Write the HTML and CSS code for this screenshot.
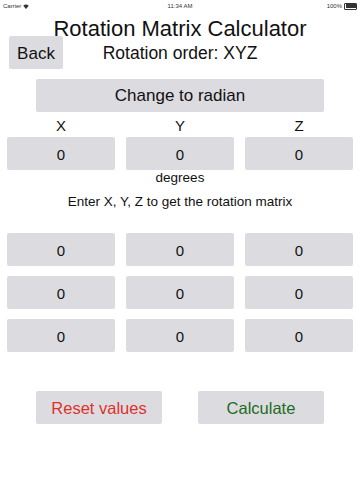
FILE: index.html
```html
<!DOCTYPE html>
<html lang="en">
<head>
    <meta charset="UTF-8">
    <meta name="viewport" content="width=device-width, initial-scale=1.0">
    <title>Rotation Matrix Calculator</title>
    <link rel="stylesheet" href="styles.css">
</head>
<body>

    <!-- Status bar -->
    <div class="status">
        <div class="status-left">
            Carrier
            <svg class="wifi" width="6" height="5" viewBox="0 0 12 10">
                <path d="M6 10 L0.5 3.5 A8 8 0 0 1 11.5 3.5 Z" fill="#333"/>
            </svg>
        </div>
        <div class="status-time">11:34 AM</div>
        <div class="status-right">
            100%
            <span class="battery"><span class="battery-fill"></span></span>
        </div>
    </div>

    <!-- Header -->
    <h1 class="title">Rotation Matrix Calculator</h1>
    <div class="header-row">
        <button class="btn back">Back</button>
        <div class="order">Rotation order: XYZ</div>
        <div></div>
    </div>

    <button class="btn wide">Change to radian</button>

    <!-- Angle inputs -->
    <div class="grid labels">
        <div>X</div>
        <div>Y</div>
        <div>Z</div>
    </div>
    <div class="grid">
        <div class="cell">0</div>
        <div class="cell">0</div>
        <div class="cell">0</div>
    </div>
    <p class="unit">degrees</p>
    <p class="hint">Enter X, Y, Z to get the rotation matrix</p>

    <!-- Matrix -->
    <div class="grid matrix">
        <div class="cell">0</div>
        <div class="cell">0</div>
        <div class="cell">0</div>
        <div class="cell">0</div>
        <div class="cell">0</div>
        <div class="cell">0</div>
        <div class="cell">0</div>
        <div class="cell">0</div>
        <div class="cell">0</div>
    </div>

    <div class="actions">
        <button class="btn action reset">Reset values</button>
        <button class="btn action calc">Calculate</button>
    </div>

</body>
</html>
```

FILE: styles.css
```css
body { margin: 0; width: 360px; height: 480px; background: #fff; color: #111; font-family: "Liberation Sans", Arial, sans-serif; }

/* Status bar */
.status { height: 12px; display: grid; grid-template-columns: 1fr auto 1fr; align-items: center; padding: 0 3px; font-size: 6px; color: #333; }
.status-left { display: flex; align-items: center; gap: 2px; }
.status-time { text-align: center; }
.status-right { display: flex; justify-content: flex-end; align-items: center; gap: 2px; }
.battery { width: 10px; height: 4px; border: 0.5px solid #333; border-radius: 1px; padding: 0.5px; display: flex; }
.battery-fill { flex: 1; background: #333; }

/* Header */
.title { margin: 7px 0 -2px; font-size: 22px; font-weight: normal; line-height: 19px; text-align: center; }
.header-row { display: grid; grid-template-columns: 54px 1fr 54px; align-items: center; padding: 0 9px; height: 33px; }
.order { text-align: center; font-size: 17.5px; padding-top: 2px; }

.btn { border: none; border-radius: 2px; background: #dcdce0; color: #111; font-family: inherit; padding: 2px 0 0; height: 33px; cursor: pointer; }
.back { font-size: 17px; width: 54px; }
.wide { display: block; width: 288px; margin: 10px auto 0; font-size: 17px; padding-top: 1px; }

/* Grids */
.grid { display: grid; grid-template-columns: repeat(3, 1fr); column-gap: 11px; row-gap: 10px; padding: 0 7px; }
.labels { height: 25px; align-items: center; text-align: center; font-size: 15px; padding-top: 2px; box-sizing: border-box; }
.cell { height: 33px; display: flex; align-items: center; justify-content: center; background: #dcdce0; border-radius: 2px; font-size: 15px; padding-top: 1px; box-sizing: border-box; }

.unit { margin: 0; text-align: center; font-size: 13.5px; line-height: 16px; }
.hint { margin: 8px 0 0; text-align: center; font-size: 13.5px; line-height: 16px; }
.matrix { margin-top: 23px; }

/* Bottom actions */
.actions { display: flex; justify-content: space-between; width: 288px; margin: 39px auto 0; }
.action { width: 126px; font-size: 16.5px; }
.reset { color: #e0302b; }
.calc { color: #1e6b22; }
```
